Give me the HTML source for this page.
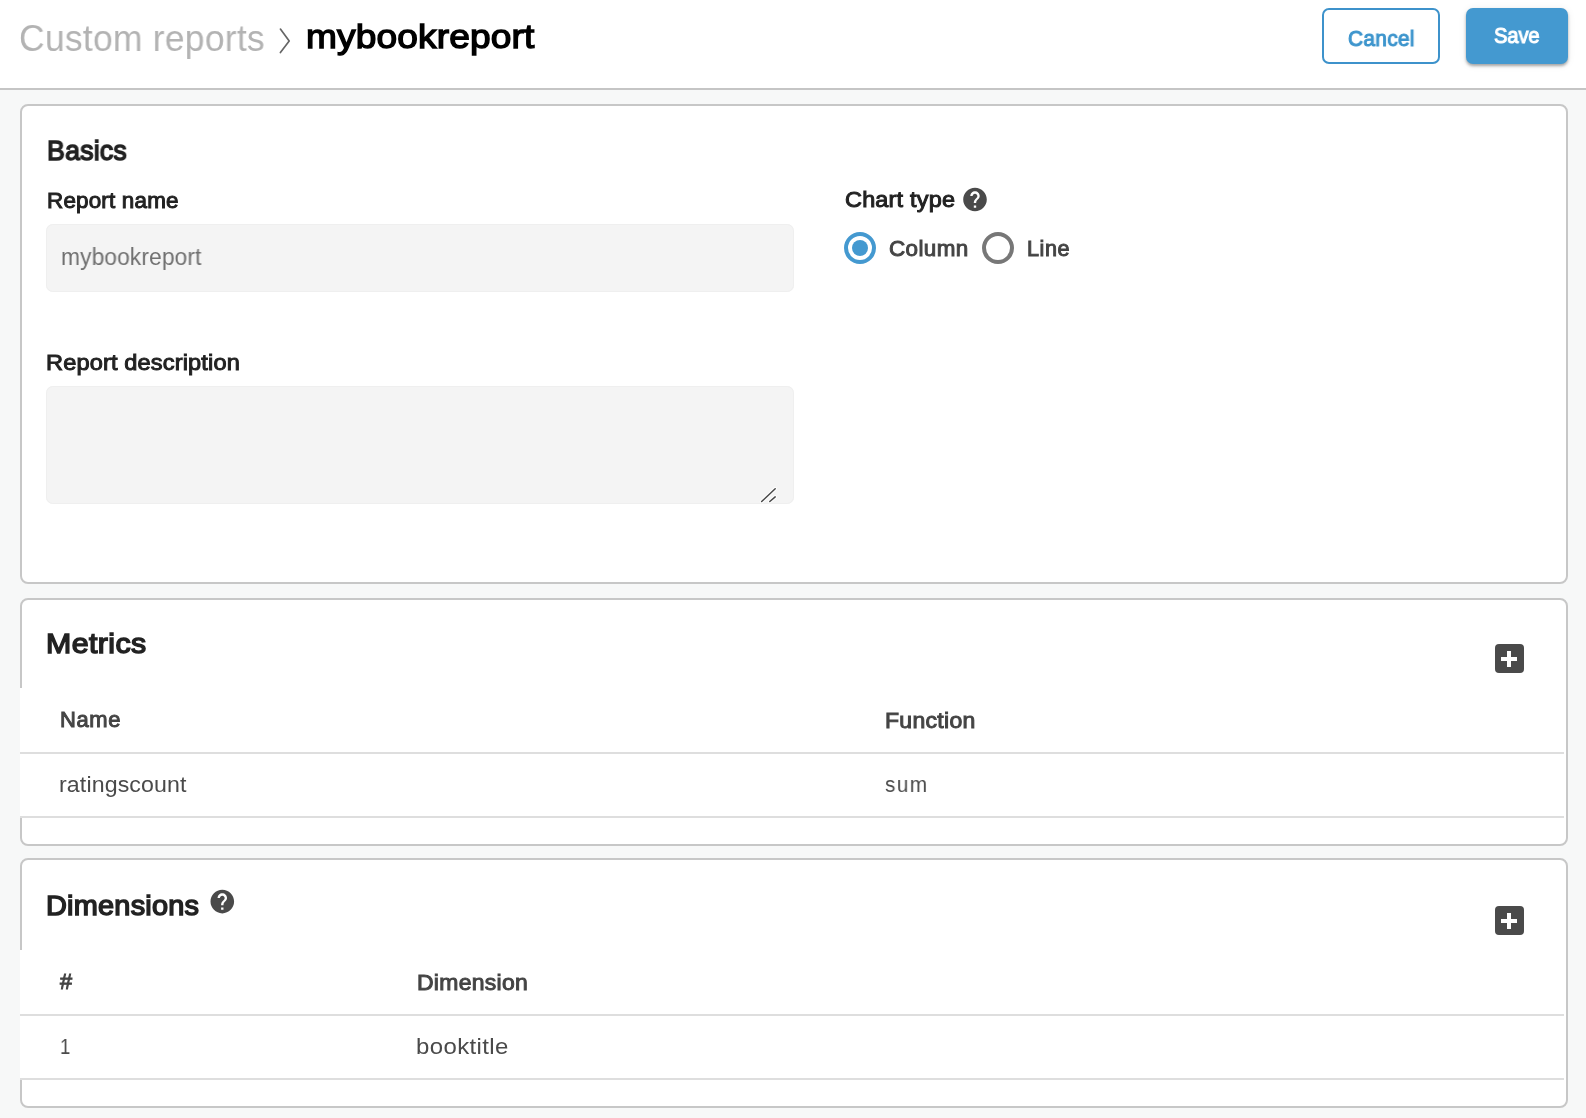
<!DOCTYPE html>
<html>
<head>
<meta charset="utf-8">
<title>Custom reports - mybookreport</title>
<style>
html,body{margin:0;padding:0;}
body{width:1586px;height:1118px;overflow:hidden;position:relative;background:#f7f8f8;font-family:"Liberation Sans",sans-serif;}
.t{position:absolute;white-space:nowrap;line-height:1;transform-origin:0 0;will-change:transform;}
.abs{position:absolute;box-sizing:border-box;}
#header{left:0;top:0;width:1586px;height:90px;background:#fff;border-bottom:2px solid #c5c5c5;}
.card{background:#fff;border:2px solid #c7c7c7;border-radius:8px;left:20px;width:1548px;}
.btn-cancel{left:1322px;top:8px;width:118px;height:56px;border:2px solid #3d92cb;border-radius:7px;background:#fff;}
.btn-save{left:1466px;top:8px;width:102px;height:56px;border-radius:7px;background:#4499d0;box-shadow:0 2px 3px rgba(0,0,0,0.33),0 1px 8px rgba(0,0,0,0.07);}
.input{left:46px;width:748px;background:#f4f4f4;border-radius:7px;box-shadow:inset 0 0 0 1px #efefef;}
.tbl{left:20px;width:1544px;background:#fff;}
.hl{position:absolute;left:0;width:1544px;height:2px;background:#dedede;}
.plus{width:29px;height:29px;left:1495px;background:#4a4a4a;border-radius:4px;}
.plus:before{content:"";position:absolute;left:6px;top:13px;width:16px;height:4px;background:#fff;}
.plus:after{content:"";position:absolute;left:12px;top:7px;width:4px;height:16px;background:#fff;}
</style>
</head>
<body>
<div id="header" class="abs"></div>
<svg class="abs" style="left:0;top:0" width="320" height="80">
  <polyline points="280.4,29.1 289.2,41 280.4,52.6" fill="none" stroke="#666" stroke-width="1.7" stroke-linecap="round" stroke-linejoin="round"/>
</svg>
<div class="abs btn-cancel"></div>
<div class="abs btn-save"></div>

<div class="abs card" style="top:104px;height:480px;"></div>
<div class="abs input" style="top:224px;height:68px;"></div>
<div class="abs input" style="top:386px;height:118px;"></div>
<svg class="abs" style="left:755px;top:482px" width="30" height="30">
  <g stroke="#fff" stroke-width="3.6" stroke-linecap="round" opacity="0.9">
  <line x1="6.7" y1="19.5" x2="20.2" y2="6.8"/><line x1="14.8" y1="19.5" x2="20.2" y2="14.9"/></g>
  <g stroke="#484848" stroke-width="1.5" stroke-linecap="round">
  <line x1="6.7" y1="19.5" x2="20.2" y2="6.8"/><line x1="14.8" y1="19.5" x2="20.2" y2="14.9"/></g>
</svg>
<svg class="abs" style="left:0;top:0;overflow:visible" width="1" height="1"><path transform="translate(960.84 185.39) scale(1.1800)" fill="#4a4a4a" d="M12 2C6.48 2 2 6.48 2 12s4.48 10 10 10 10-4.48 10-10S17.52 2 12 2zm1 17h-2v-2h2v2zm2.07-7.75l-.9.92C13.45 12.9 13 13.5 13 15h-2v-.5c0-1.1.45-2.1 1.17-2.83l1.24-1.26c.37-.36.59-.86.59-1.41 0-1.1-.9-2-2-2s-2 .9-2 2H8c0-2.21 1.79-4 4-4s4 1.79 4 4c0 .88-.36 1.68-.93 2.25z"/></svg>
<svg class="abs" style="left:830px;top:218px" width="200" height="60">
  <circle cx="30" cy="30" r="14" fill="none" stroke="#4499d0" stroke-width="4"/>
  <circle cx="30" cy="30" r="8" fill="#4499d0"/>
  <circle cx="168" cy="30" r="14" fill="none" stroke="#777" stroke-width="4"/>
</svg>

<div class="abs card" style="top:598px;height:248px;"></div>
<div class="abs plus" style="top:644px;"></div>
<div class="abs tbl" style="top:688px;height:130px;">
  <div class="hl" style="top:64px"></div>
  <div class="hl" style="top:128px"></div>
</div>

<div class="abs card" style="top:858px;height:250px;"></div>
<svg class="abs" style="left:0;top:0;overflow:visible" width="1" height="1"><path transform="translate(208.14 887.44) scale(1.1800)" fill="#4a4a4a" d="M12 2C6.48 2 2 6.48 2 12s4.48 10 10 10 10-4.48 10-10S17.52 2 12 2zm1 17h-2v-2h2v2zm2.07-7.75l-.9.92C13.45 12.9 13 13.5 13 15h-2v-.5c0-1.1.45-2.1 1.17-2.83l1.24-1.26c.37-.36.59-.86.59-1.41 0-1.1-.9-2-2-2s-2 .9-2 2H8c0-2.21 1.79-4 4-4s4 1.79 4 4c0 .88-.36 1.68-.93 2.25z"/></svg>
<div class="abs plus" style="top:906px;"></div>
<div class="abs tbl" style="top:950px;height:130px;">
  <div class="hl" style="top:64px"></div>
  <div class="hl" style="top:128px"></div>
</div>

<div id="t_custom" class="t" style="left:19.20px;top:20.55px;font-size:36.5px;letter-spacing:0.277px;color:#b3b3b3;transform:scaleX(0.9707)">Custom reports</div>
<div id="t_myb" class="t" style="left:305.90px;top:19.41px;font-size:34px;letter-spacing:0.109px;color:#000000;transform:scaleX(1.0917);-webkit-text-stroke:1.36px #000000">mybookreport</div>
<div id="t_cancel" class="t" style="left:1347.60px;top:28.02px;font-size:22px;letter-spacing:0.340px;color:#3d95cd;transform:scaleX(0.9474);-webkit-text-stroke:1.06px #3d95cd">Cancel</div>
<div id="t_save" class="t" style="left:1494.20px;top:25.42px;font-size:22px;letter-spacing:-0.100px;color:#ffffff;transform:scaleX(0.9153);-webkit-text-stroke:1.06px #ffffff">Save</div>
<div id="t_basics" class="t" style="left:47.40px;top:136.94px;font-size:28px;letter-spacing:0.220px;color:#222222;transform:scaleX(0.9545);-webkit-text-stroke:1.46px #222222">Basics</div>
<div id="t_rname" class="t" style="left:47.40px;top:190.60px;font-size:21.5px;letter-spacing:0.180px;color:#222222;transform:scaleX(1.0426);-webkit-text-stroke:0.95px #222222">Report name</div>
<div id="t_inp" class="t" style="left:61.40px;top:245.98px;font-size:23px;letter-spacing:0.118px;color:#707070;transform:scaleX(0.9893)">mybookreport</div>
<div id="t_rdesc" class="t" style="left:46.40px;top:353.15px;font-size:21.5px;letter-spacing:0.129px;color:#222222;transform:scaleX(1.0968);-webkit-text-stroke:0.95px #222222">Report description</div>
<div id="t_chart" class="t" style="left:844.60px;top:190.15px;font-size:21.5px;letter-spacing:0.178px;color:#222222;transform:scaleX(1.0907);-webkit-text-stroke:0.95px #222222">Chart type</div>
<div id="t_column" class="t" style="left:889.40px;top:239.10px;font-size:21.5px;letter-spacing:0.380px;color:#444444;transform:scaleX(1.0432);-webkit-text-stroke:0.95px #444444">Column</div>
<div id="t_line" class="t" style="left:1027.40px;top:239.10px;font-size:21.5px;letter-spacing:0.567px;color:#444444;transform:scaleX(1.0062);-webkit-text-stroke:0.95px #444444">Line</div>
<div id="t_metrics" class="t" style="left:46.00px;top:630.49px;font-size:28px;letter-spacing:0.417px;color:#222222;transform:scaleX(1.0809);-webkit-text-stroke:1.46px #222222">Metrics</div>
<div id="t_name" class="t" style="left:59.60px;top:710.45px;font-size:21.5px;letter-spacing:0.600px;color:#444444;transform:scaleX(1.0218);-webkit-text-stroke:0.95px #444444">Name</div>
<div id="t_func" class="t" style="left:884.60px;top:710.70px;font-size:21.5px;letter-spacing:0.271px;color:#444444;transform:scaleX(1.0710);-webkit-text-stroke:0.95px #444444">Function</div>
<div id="t_rc" class="t" style="left:59.20px;top:773.90px;font-size:22.5px;letter-spacing:0.118px;color:#4a4a4a;transform:scaleX(1.0290)">ratingscount</div>
<div id="t_sum" class="t" style="left:884.80px;top:774.10px;font-size:22.5px;letter-spacing:1.450px;color:#4a4a4a;transform:scaleX(0.9247)">sum</div>
<div id="t_dims" class="t" style="left:46.20px;top:892.19px;font-size:28px;letter-spacing:0.222px;color:#222222;transform:scaleX(1.0321);-webkit-text-stroke:1.46px #222222">Dimensions</div>
<div id="t_hash" class="t" style="left:59.60px;top:972.40px;font-size:21.5px;letter-spacing:0.000px;color:#444444;transform:scaleX(1.0126);-webkit-text-stroke:0.95px #444444">#</div>
<div id="t_dim" class="t" style="left:416.80px;top:973.00px;font-size:21.5px;letter-spacing:0.275px;color:#444444;transform:scaleX(1.0675);-webkit-text-stroke:0.95px #444444">Dimension</div>
<div id="t_one" class="t" style="left:60.00px;top:1035.75px;font-size:22.5px;letter-spacing:0.000px;color:#4a4a4a;transform:scaleX(0.8240)">1</div>
<div id="t_bt" class="t" style="left:415.60px;top:1036.00px;font-size:22.5px;letter-spacing:0.363px;color:#4a4a4a;transform:scaleX(1.0656)">booktitle</div>
</body>
</html>
